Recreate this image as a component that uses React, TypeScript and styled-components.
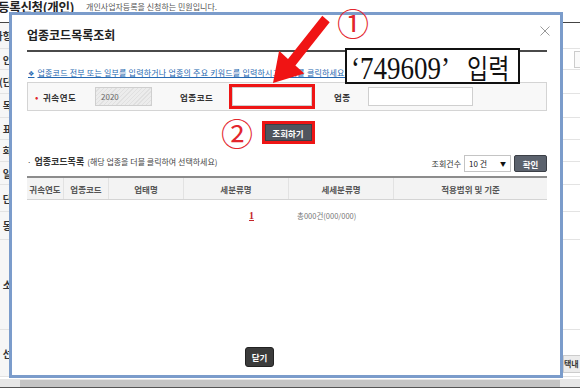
import React from 'react';
import styled, { createGlobalStyle } from 'styled-components';

const GlobalStyle = createGlobalStyle`
  html, body { margin: 0; padding: 0; background: #fff; }
  body { font-family: "Noto Sans CJK KR", "Noto Sans", sans-serif; color: #333; }
  * { box-sizing: border-box; }
`;

const Page = styled.div`
  position: relative;
  width: 580px;
  height: 388px;
  overflow: hidden;
  background: #fff;
  display: flex;
  flex-direction: column;
`;

/* ---- page behind the popup ---- */

const PageHeader = styled.div`
  height: 23px;
  flex-shrink: 0;
  display: flex;
  align-items: flex-start;
  gap: 12px;
  border-bottom: 1px solid #444;
`;

const PageTitle = styled.div`
  font-size: 12.5px;
  line-height: 13px;
  font-weight: 700;
  letter-spacing: -0.3px;
  color: #222;
  margin-left: -2px;
`;

const PageSub = styled.div`
  font-size: 8px;
  line-height: 10px;
  color: #555;
  padding-top: 2px;
`;

const BgBody = styled.div`
  flex: 1;
  display: flex;
  flex-direction: column;
`;

const BgRow = styled.div<{ $h: number }>`
  height: ${(p) => p.$h}px;
  flex-shrink: 0;
  display: flex;
  justify-content: space-between;
  border-bottom: 1px solid #e3e3e3;
`;

const BgLabel = styled.div`
  width: 12px;
  display: flex;
  align-items: center;
  justify-content: flex-end;
  overflow: hidden;
  white-space: nowrap;
  background: #f6f6f6;
  font-size: 10px;
  font-weight: 700;
  color: #333;
`;

const BgRight = styled.div`
  width: 17px;
  display: flex;
  align-items: center;
  justify-content: flex-end;
`;

const BgInput = styled.div`
  width: 6px;
  height: 17px;
  border: 1px solid #ccc;
  border-right: none;
  background: #fafafa;
`;

const BgButton = styled.div`
  align-self: flex-end;
  margin-bottom: 3px;
  height: 18px;
  width: 17px;
  background: #ececec;
  border: 1px solid #ccc;
  border-right: none;
  font-size: 8px;
  font-weight: 700;
  line-height: 16px;
  white-space: nowrap;
  overflow: hidden;
  color: #333;
`;

const ScrollBar = styled.div`
  height: 9px;
  flex-shrink: 0;
  background: #e6e6e6;
  border-bottom: 1px solid #555;
  display: flex;
  align-items: center;
  padding: 0 20px;
`;

const ScrollThumb = styled.div`
  height: 7px;
  flex: 1;
  background: #c4c4c4;
`;

/* ---- popup ---- */

const Modal = styled.div`
  position: absolute;
  left: 9px;
  top: 12px;
  width: 554px;
  height: 366px;
  border: 3px solid #7b9ccb;
  background: #fff;
  display: flex;
  flex-direction: column;
`;

const ModalHeader = styled.div`
  height: 37px;
  margin: 0 13px 0 15px;
  padding-top: 3px;
  display: flex;
  align-items: center;
  justify-content: space-between;
  border-bottom: 2px solid #4a4a4a;
`;

const ModalTitle = styled.div`
  font-size: 12px;
  font-weight: 700;
  color: #222;
`;

const CloseX = styled.svg`
  margin-right: -3px;
  margin-top: -6px;
`;

const ModalBody = styled.div`
  flex: 1;
  display: flex;
  flex-direction: column;
  padding: 0 13px 8px 15px;
`;

const Info = styled.div`
  margin-top: 15px;
  height: 12px;
  font-size: 8px;
  line-height: 12px;
  letter-spacing: 0.2px;
  color: #2467b0;
  text-decoration: underline;
  white-space: nowrap;
  padding-left: 1px;
`;

const InfoMark = styled.span`
  font-family: "DejaVu Sans", sans-serif;
  font-size: 7px;
  margin-right: 3px;
`;

const SearchBox = styled.div`
  margin-top: 3px;
  height: 29px;
  border: 1px solid #d4d4d4;
  background: #f8f8f8;
  display: flex;
  align-items: center;
`;

const Bullet = styled.span`
  width: 8px;
  margin-left: 7px;
  color: #e0262d;
  font-size: 10px;
  line-height: 1;
`;

const FieldLabel = styled.span<{ $w: number; $ml?: number }>`
  width: ${(p) => p.$w}px;
  margin-left: ${(p) => p.$ml ?? 0}px;
  font-size: 8.5px;
  font-weight: 700;
  letter-spacing: 0.5px;
  color: #333;
  white-space: nowrap;
`;

const TextInput = styled.div<{ $w: number; $mark?: boolean; $hatch?: boolean }>`
  width: ${(p) => p.$w}px;
  height: 19px;
  border: 1px solid #cfcfcf;
  background: ${(p) =>
    p.$hatch
      ? 'repeating-linear-gradient(135deg, #ececec 0 2px, #e0e0e0 2px 3px)'
      : '#fff'};
  font-size: 8px;
  line-height: 17px;
  padding-left: 5px;
  color: #666;
  outline: ${(p) => (p.$mark ? '3px solid #ee1515' : 'none')};
`;

const ButtonRow = styled.div`
  margin-top: 13px;
  display: flex;
  justify-content: center;
  padding-left: 2px;
`;

const DarkButton = styled.div<{ $w: number; $h: number; $bg: string; $mark?: boolean }>`
  width: ${(p) => p.$w}px;
  height: ${(p) => p.$h}px;
  background: ${(p) => p.$bg};
  border: 1px solid #3b3f46;
  border-radius: ${(p) => (p.$mark ? 0 : 2)}px;
  color: #fff;
  font-size: 8.5px;
  font-weight: 700;
  display: flex;
  align-items: center;
  justify-content: center;
  outline: ${(p) => (p.$mark ? '3px solid #ee1515' : 'none')};
`;

const ListBar = styled.div`
  margin-top: 14px;
  height: 17px;
  display: flex;
  align-items: center;
  justify-content: space-between;
`;

const ListTitle = styled.div`
  font-size: 8px;
  color: #444;
  white-space: nowrap;
  margin-top: -4px;
  strong {
    font-size: 9px;
    font-weight: 700;
    color: #333;
    margin: 0 3px 0 3px;
  }
`;

const Controls = styled.div`
  display: flex;
  align-items: center;
`;

const ControlLabel = styled.span`
  font-size: 8px;
  color: #333;
  margin-right: 3px;
`;

const Select = styled.div`
  width: 47px;
  height: 17px;
  border: 1px solid #c4c4c4;
  background: #fff;
  display: flex;
  align-items: center;
  justify-content: space-between;
  padding: 0 4px 0 4px;
  font-size: 8px;
  color: #222;
  margin-right: 3px;
`;

const Caret = styled.span`
  font-size: 6px;
  color: #111;
`;

const TableHead = styled.div`
  margin-top: 4px;
  height: 24px;
  display: grid;
  grid-template-columns: 37px 45px 75px 105px 105px 1fr;
  border-top: 2px solid #8c8c8c;
  border-bottom: 1px solid #d4d4d4;
  background: #f3f3f3;
`;

const HeadCell = styled.div`
  display: flex;
  align-items: center;
  justify-content: center;
  font-size: 8.5px;
  font-weight: 700;
  color: #555;
  white-space: nowrap;
  border-right: 1px solid #e2e2e2;
  &:last-child {
    border-right: none;
  }
`;

const Paging = styled.div`
  margin-top: 8px;
  height: 14px;
  display: flex;
  align-items: center;
  padding-left: 222px;
`;

const PageNum = styled.span`
  font-family: "Liberation Serif", serif;
  font-size: 10px;
  font-weight: 700;
  color: #c3252b;
  text-decoration: underline;
`;

const Total = styled.span`
  margin-left: 43px;
  font-size: 7.5px;
  color: #777;
`;

const Footer = styled.div`
  margin-top: auto;
  padding-left: 218px;
  display: flex;
`;

const CloseButton = styled.div`
  width: 29px;
  height: 20px;
  background: #3b3b3b;
  border: 1px solid #222;
  border-radius: 3px;
  color: #fff;
  font-size: 8.5px;
  font-weight: 700;
  display: flex;
  align-items: center;
  justify-content: center;
`;

/* ---- annotations drawn over the capture ---- */

const Circled = styled.span<{ $x: number; $y: number }>`
  position: absolute;
  left: ${(p) => p.$x}px;
  top: ${(p) => p.$y}px;
  font-size: 32px;
  line-height: 1;
  color: #e3262d;
`;

const ArrowSvg = styled.svg`
  position: absolute;
  left: 0;
  top: 0;
`;

const Note = styled.div`
  position: absolute;
  left: 345px;
  top: 48px;
  width: 175px;
  height: 36px;
  border: 2.5px solid #111;
  background: #fff;
  display: flex;
  align-items: center;
  padding-left: 4px;
  overflow: hidden;
`;

const NoteText = styled.div`
  display: flex;
  align-items: baseline;
  gap: 17px;
  color: #111;
  transform: scaleY(1.2);
  margin-top: 1px;
`;

const NoteDigits = styled.span`
  font-family: "Liberation Serif", serif;
  font-size: 27px;
`;

const NoteWord = styled.span`
  font-size: 23px;
`;

const bgRows = [
  { label: '사항', h: 26 },
  { label: '인', h: 21, input: true },
  { label: '(단', h: 24 },
  { label: '목', h: 24 },
  { label: '표', h: 22 },
  { label: '화', h: 22 },
  { label: '일', h: 23 },
  { label: '단', h: 27 },
  { label: '동', h: 28 },
  { label: '소', h: 90 },
  { label: '선', h: 47, button: true },
];

const columns = ['귀속연도', '업종코드', '업태명', '세분류명', '세세분류명', '적용범위 및 기준'];

export default function App() {
  return (
    <Page>
      <GlobalStyle />
      <PageHeader>
        <PageTitle>등록신청(개인)</PageTitle>
        <PageSub>개인사업자등록을 신청하는 민원입니다.</PageSub>
      </PageHeader>
      <BgBody>
        {bgRows.map((r) => (
          <BgRow key={r.label} $h={r.h}>
            <BgLabel>{r.label}</BgLabel>
            <BgRight>
              {r.input && <BgInput />}
              {r.button && <BgButton>택내</BgButton>}
            </BgRight>
          </BgRow>
        ))}
      </BgBody>
      <ScrollBar>
        <ScrollThumb />
      </ScrollBar>

      <Modal>
        <ModalHeader>
          <ModalTitle>업종코드목록조회</ModalTitle>
          <CloseX width="10" height="10" viewBox="0 0 10 10">
            <path d="M0.5 0.5 L9.5 9.5 M9.5 0.5 L0.5 9.5" stroke="#9a9a9a" strokeWidth="1" />
          </CloseX>
        </ModalHeader>
        <ModalBody>
          <Info>
            <InfoMark>❖</InfoMark>
            업종코드 전부 또는 일부를 입력하거나 업종의 주요 키워드를 입력하시고 조회를 클릭하세요.
          </Info>
          <SearchBox>
            <Bullet>•</Bullet>
            <FieldLabel $w={52}>귀속연도</FieldLabel>
            <TextInput $w={57} $hatch>2020</TextInput>
            <FieldLabel $w={52} $ml={28}>업종코드</FieldLabel>
            <TextInput $w={80} $mark />
            <FieldLabel $w={34} $ml={22}>업종</FieldLabel>
            <TextInput $w={105} />
          </SearchBox>
          <ButtonRow>
            <DarkButton $w={47} $h={17} $bg="#50555e" $mark>조회하기</DarkButton>
          </ButtonRow>
          <ListBar>
            <ListTitle>
              ·<strong>업종코드목록</strong>(해당 업종을 더블 클릭하여 선택하세요)
            </ListTitle>
            <Controls>
              <ControlLabel>조회건수</ControlLabel>
              <Select>
                10 건<Caret>▼</Caret>
              </Select>
              <DarkButton $w={33} $h={17} $bg="#5b626d">확인</DarkButton>
            </Controls>
          </ListBar>
          <TableHead>
            {columns.map((c) => (
              <HeadCell key={c}>{c}</HeadCell>
            ))}
          </TableHead>
          <Paging>
            <PageNum>1</PageNum>
            <Total>총000건(000/000)</Total>
          </Paging>
          <Footer>
            <CloseButton>닫기</CloseButton>
          </Footer>
        </ModalBody>
      </Modal>

      <ArrowSvg width="580" height="388" viewBox="0 0 580 388">
        <polygon
          points="322.3,15.7 329.7,22.3 295.4,65.5 304.3,73.6 273,83 279.1,50.8 288,58.9"
          fill="#f01414"
        />
      </ArrowSvg>
      <Circled $x={337} $y={6}>①</Circled>
      <Circled $x={221} $y={116}>②</Circled>
      <Note>
        <NoteText>
          <NoteDigits>‘749609’</NoteDigits>
          <NoteWord>입력</NoteWord>
        </NoteText>
      </Note>
    </Page>
  );
}
